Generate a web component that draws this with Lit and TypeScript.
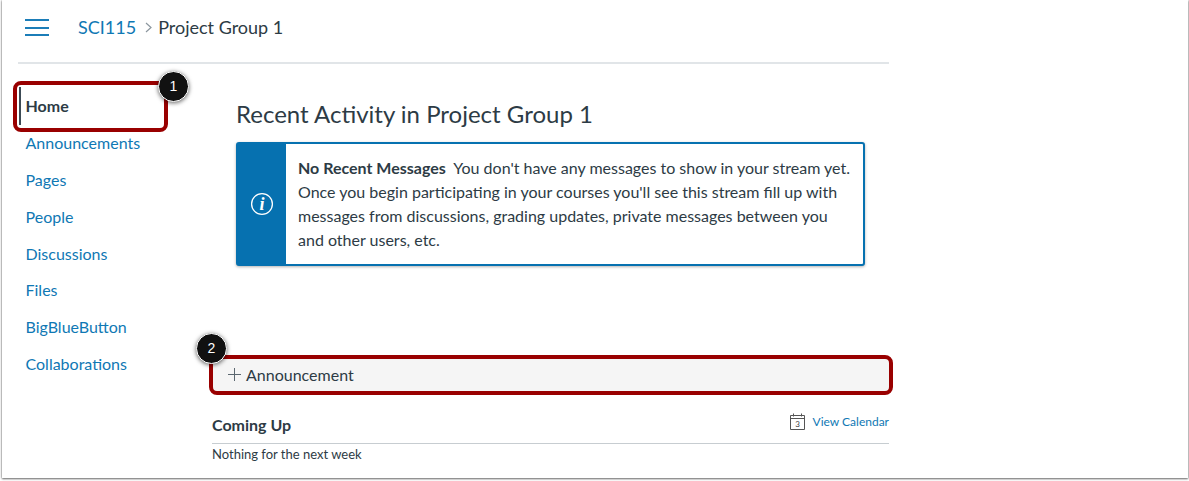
import { LitElement, html, css } from "lit";
import { customElement } from "lit/decorators.js";

const NAV = ["Announcements", "Pages", "People", "Discussions", "Files", "BigBlueButton", "Collaborations"];

@customElement("app-root")
export class AppRoot extends LitElement {
  static styles = css`
    :host { display: block; width: 1189px; height: 481px; background: #fff; overflow: hidden;
      font-family: Lato, "Open Sans", sans-serif; color: #2d3b45; box-sizing: border-box; }
    * { box-sizing: border-box; }
    a { color: #0f78b4; text-decoration: none; }
    .frame { width: 1186px; height: 478px; margin-left: 2px; padding: 1px 0 0 16px; background: #fff;
      box-shadow: 0 0 2px rgba(0,0,0,.4), 0 1px 2px rgba(0,0,0,.5); }
    .page { width: 871px; }
    .header { height: 63px; display: flex; align-items: center; border-bottom: 2px solid #e1e5e8; padding: 0 0 10px 7px; }
    .burger { width: 24px; height: 17px; display: flex; flex-direction: column; justify-content: space-between; margin: 2px 29px 0 0; }
    .burger i { display: block; height: 2px; background: #1b7db8; }
    .crumbs { display: flex; align-items: center; font-size: 18px; line-height: 24px; }
    .sep { width: 7px; height: 11px; margin: 1px 6px 0 9px; }
    .body { display: flex; }
    .nav { width: 191px; padding: 18px 0 0 7.5px; flex: none; }
    .nav-item { display: block; height: 36.85px; line-height: 36px; font-size: 16px; }
    .home { position: relative; font-weight: 700; color: #2d3b45; height: 44px; line-height: 50px; margin-top: -1px; }
    .home-bar { position: absolute; left: -6.5px; top: 6px; width: 2px; height: 38px; background: #3c4a55; }
    .home-mark { position: absolute; left: -12.5px; top: 0; width: 155px; height: 51px; border: 4px solid #990000; border-radius: 8px; }
    .badge { position: absolute; width: 31px; height: 31px; border-radius: 50%; background: #111; color: #fff;
      border: 1px solid #fff; box-shadow: 0 1px 4px rgba(0,0,0,.6); font: 400 14px/28px "Liberation Sans", sans-serif; text-align: center; }
    .b1 { left: 132.5px; top: -10px; }
    .b2 { left: -17px; top: -26px; z-index: 1; }
    .main { flex: 1; min-width: 0; }
    .recent { padding: 0 24px 0 27px; }
    h1 { font-size: 24px; font-weight: 400; line-height: 30px; margin: 35px 0 13px; color: #2d3b45; }
    .alert { display: flex; height: 124px; border: 2px solid #0671b0; border-radius: 3px; box-shadow: 0 1px 3px rgba(0,0,0,.3); background: #fff; }
    .alert-icon { width: 48px; margin: -1px 0; background: #0671b0; display: flex; align-items: center; justify-content: center; flex: none; }
    .alert-text { padding: 11.5px 0 0 12px; font-size: 16px; line-height: 24.2px; white-space: nowrap; }
    .alert-text b { font-weight: 700; margin-right: 4px; }
    .button { position: relative; margin: 89px 0 0 0; width: 684px; height: 40px; border: 4px solid #990000; border-radius: 8px;
      background: #f5f5f5; display: flex; align-items: center; padding: 0 0 2px 15px; font-size: 16px; }
    .plus { width: 13px; height: 13px; margin-right: 5px; }
    .up { margin: 17px 0 0 3px; width: 677px; }
    .up-head { display: flex; align-items: center; justify-content: space-between; height: 32px; border-bottom: 1px solid #c7cdd1; }
    .up-head h2 { margin: -6px 0 0; font-size: 16px; font-weight: 700; line-height: 24px; }
    .cal { display: flex; align-items: center; font-size: 12px; gap: 8px; margin-top: -12px; }
    .none { font-size: 13px; line-height: 20px; }
  `;

  render() {
    return html`
      <div class="frame">
        <div class="page">
          <div class="header">
            <div class="burger"><i></i><i></i><i></i></div>
            <div class="crumbs">
              <a href="#">SCI115</a>
              <svg class="sep" viewBox="0 0 7 11" fill="none" stroke="#8b969e" stroke-width="1.2"><path d="M1 1l5 4.5L1 10"/></svg>
              <span>Project Group 1</span>
            </div>
          </div>
          <div class="body">
            <nav class="nav">
              <div class="nav-item home">
                <span class="home-bar"></span>
                <span class="home-mark"></span>
                <span class="badge b1">1</span>
                Home
              </div>
              ${NAV.map((n) => html`<a class="nav-item" href="#">${n}</a>`)}
            </nav>
            <main class="main">
              <div class="recent">
                <h1>Recent Activity in Project Group 1</h1>
                <div class="alert">
                  <div class="alert-icon">
                    <svg width="24" height="24" viewBox="0 0 24 24" fill="none">
                      <circle cx="12" cy="12" r="10.4" stroke="#fff" stroke-width="1.3"/>
                      <text x="12" y="18" text-anchor="middle" fill="#fff" font-family="Liberation Serif" font-style="italic" font-weight="700" font-size="18">i</text>
                    </svg>
                  </div>
                  <div class="alert-text">
                    <b>No Recent Messages</b> You don't have any messages to show in your stream yet.<br />
                    Once you begin participating in your courses you'll see this stream fill up with<br />
                    messages from discussions, grading updates, private messages between you<br />
                    and other users, etc.
                  </div>
                </div>
              </div>
              <div class="button">
                <span class="badge b2">2</span>
                <svg class="plus" viewBox="0 0 13 13" stroke="#5b6770" stroke-width="1"><path d="M6.5 0v13M0 6.5h13"/></svg>
                Announcement
              </div>
              <div class="up">
                <div class="up-head">
                  <h2>Coming Up</h2>
                  <a class="cal" href="#">
                    <svg width="15" height="17" viewBox="0 0 15 17" fill="none" stroke="#555" stroke-width="1">
                      <path d="M.5 2.5h14v14H.5zM.5 5.5h14M3.5 .5v3M11.5 .5v3"/>
                      <text x="7.5" y="14" text-anchor="middle" stroke="none" fill="#444" font-size="8" font-family="Lato">3</text>
                    </svg>
                    View Calendar
                  </a>
                </div>
                <div class="none">Nothing for the next week</div>
              </div>
            </main>
          </div>
        </div>
      </div>
    `;
  }
}
